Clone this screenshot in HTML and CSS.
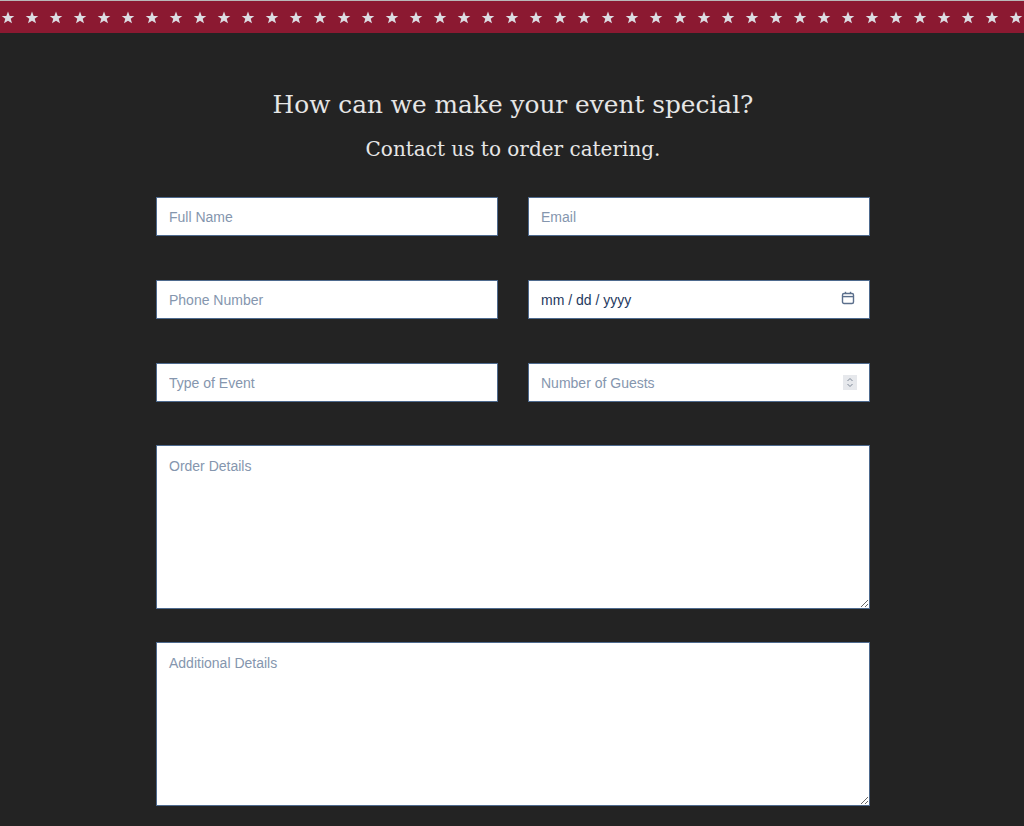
FILE: index.html
```html
<!DOCTYPE html>
<html lang="en">
<head>
    <meta charset="UTF-8">
    <meta name="viewport" content="width=device-width, initial-scale=1.0">
    <title>Catering</title>
    <link rel="stylesheet" href="styles.css">
</head>
<body>
    <div class="star-band">
        <svg width="100%" height="32" xmlns="http://www.w3.org/2000/svg">
            <defs>
                <pattern id="stars" x="-4" y="0" width="24" height="32" patternUnits="userSpaceOnUse">
                    <polygon fill="#dcdce2" points="12,10.5 13.7,14.9 18.3,15 14.7,17.8 16,22.3 12,19.7 8,22.3 9.3,17.8 5.7,15 10.3,14.9"/>
                </pattern>
            </defs>
            <rect width="100%" height="32" fill="url(#stars)"/>
        </svg>
    </div>

    <section class="catering">
        <h1 class="title">How can we make your event special?</h1>
        <h2 class="subtitle">Contact us to order catering.</h2>

        <form class="order-form">
            <div class="form-row">
                <input type="text" placeholder="Full Name" class="field">
                <input type="email" placeholder="Email" class="field">
            </div>
            <div class="form-row">
                <input type="tel" placeholder="Phone Number" class="field">
                <div class="field-wrap">
                    <input type="text" value="mm / dd / yyyy" class="field date-field">
                    <svg class="field-icon calendar-icon" width="14" height="14" viewBox="0 0 14 14">
                        <rect x="1.5" y="2.5" width="11" height="10" rx="1.5" fill="none" stroke="#5b6f8c" stroke-width="1.4"/>
                        <line x1="1.5" y1="5.6" x2="12.5" y2="5.6" stroke="#5b6f8c" stroke-width="1.4"/>
                        <line x1="4.5" y1="0.8" x2="4.5" y2="3" stroke="#5b6f8c" stroke-width="1.4"/>
                        <line x1="9.5" y1="0.8" x2="9.5" y2="3" stroke="#5b6f8c" stroke-width="1.4"/>
                    </svg>
                </div>
            </div>
            <div class="form-row">
                <input type="text" placeholder="Type of Event" class="field">
                <div class="field-wrap">
                    <input type="text" placeholder="Number of Guests" class="field">
                    <svg class="field-icon spin-icon" width="14" height="15" viewBox="0 0 14 15">
                        <rect width="14" height="15" fill="#e6e8ec"/>
                        <polyline points="4.5,6 7,3.5 9.5,6" fill="none" stroke="#7d8796" stroke-width="1"/>
                        <polyline points="4.5,9 7,11.5 9.5,9" fill="none" stroke="#7d8796" stroke-width="1"/>
                    </svg>
                </div>
            </div>
            <textarea placeholder="Order Details" class="field area order-area"></textarea>
            <textarea placeholder="Additional Details" class="field area"></textarea>
        </form>
    </section>
</body>
</html>
```

FILE: styles.css
```css
body {
    margin: 0;
    padding-left: 2px;
    background-color: #232323;
    font-family: "Liberation Sans", Arial, sans-serif;
    border-top: 1px solid #b9b9b9;
}

.star-band {
    background-color: #8b1931;
    height: 32px;
    margin-left: -2px;
}

.star-band svg {
    display: block;
}

.catering {
    width: 714px;
    margin: 0 auto;
    padding-top: 54px;
    text-align: center;
}

.title {
    margin: 0;
    font-family: "DejaVu Serif", Georgia, serif;
    font-weight: normal;
    font-size: 24.8px;
    line-height: 36px;
    color: #e6e6e6;
}

.subtitle {
    margin: 11px 0 0;
    font-family: "DejaVu Serif", Georgia, serif;
    font-weight: normal;
    font-size: 20px;
    line-height: 30px;
    color: #e6e6e6;
}

.order-form {
    margin-top: 33px;
    display: flex;
    flex-direction: column;
    gap: 44px;
    text-align: left;
}

.form-row {
    display: grid;
    grid-template-columns: 1fr 1fr;
    gap: 30px;
}

.field-wrap {
    position: relative;
}

.field {
    display: block;
    width: 100%;
    box-sizing: border-box;
    height: 39px;
    padding: 0 12px;
    border: 1px solid #4e6a8e;
    border-radius: 0;
    background-color: #fff;
    font-family: "Liberation Sans", Arial, sans-serif;
    font-size: 14px;
    color: #1f3a60;
    outline: none;
}

.field::placeholder {
    color: #8596ae;
}

.date-field {
    color: #1f3a60;
}

.field-icon {
    position: absolute;
    right: 13px;
    top: 12px;
}

.calendar-icon {
    top: 11px;
    right: 15px;
}

.area {
    flex: none;
    height: 164px;
    padding: 12px;
    resize: both;
}

.order-area {
    margin-top: -1px;
    margin-bottom: -11px;
}
```
